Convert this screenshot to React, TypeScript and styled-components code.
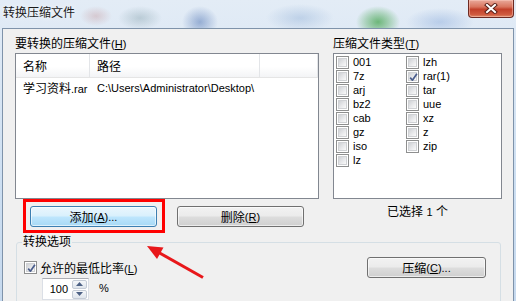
import React from "react";
import styled, { createGlobalStyle } from "styled-components";

const Global = createGlobalStyle`
  html, body { margin: 0; padding: 0; }
  body { width: 516px; height: 301px; overflow: hidden; background: #c9dbef; }
`;

const Screen = styled.div`
  position: relative;
  width: 516px;
  height: 301px;
  overflow: hidden;
  display: flex;
  flex-direction: column;
  font-family: "Liberation Sans", "Noto Sans CJK SC", sans-serif;
  font-size: 12px;
  color: #000;
  background:
    radial-gradient(ellipse 22px 16px at 378px 22px, rgba(70, 165, 80, 0.75) 0, rgba(70, 165, 80, 0.35) 55%, rgba(70, 165, 80, 0) 100%),
    radial-gradient(ellipse 18px 16px at 200px 22px, rgba(60, 100, 170, 0.45) 0, rgba(60, 100, 170, 0.2) 55%, rgba(60, 100, 170, 0) 100%),
    radial-gradient(ellipse 16px 10px at 96px 16px, rgba(180, 100, 100, 0.25), rgba(180, 100, 100, 0)),
    radial-gradient(ellipse 22px 12px at 140px 18px, rgba(70, 110, 120, 0.25), rgba(70, 110, 120, 0)),
    radial-gradient(ellipse 34px 14px at 300px 18px, rgba(110, 150, 200, 0.3), rgba(110, 150, 200, 0)),
    radial-gradient(ellipse 34px 14px at 440px 22px, rgba(110, 150, 210, 0.35), rgba(110, 150, 210, 0)),
    linear-gradient(180deg, #e3ecf6 0%, #cddff2 60%, #c6d9ee 100%);
`;

const TitleBar = styled.div`
  height: 28px;
  flex: none;
  display: flex;
  align-items: flex-start;
`;

const TitleText = styled.div`
  margin: 6px 0 0 3px;
  line-height: 14px;
  font-size: 12px;
  color: #1b1b1b;
  text-shadow: 0 0 6px rgba(255, 255, 255, 0.9);
`;

const CloseButton = styled.div`
  margin-left: auto;
  margin-right: 2px;
  width: 46px;
  height: 18px;
  box-sizing: border-box;
  border: 1px solid #6d2a22;
  border-top: none;
  border-radius: 0 0 4px 4px;
  background: linear-gradient(180deg, #e9a99a 0%, #d9755f 40%, #c2402a 55%, #cf5a3f 85%, #e08a68 100%);
  box-shadow: inset 0 0 0 1px rgba(255, 210, 200, 0.45);
  display: flex;
  align-items: center;
  justify-content: center;
`;

const Client = styled.div`
  flex: 1;
  margin: 0 2px;
  background: #f0f0f0;
  border: 1px solid #7f93aa;
  border-bottom: none;
  padding: 8px 0 0 12px;
  display: flex;
  flex-direction: column;
`;

const Panes = styled.div`
  display: grid;
  grid-template-columns: 304px 169px;
  column-gap: 14px;
`;

const Pane = styled.div`
  display: flex;
  flex-direction: column;
`;

const Label = styled.div`
  line-height: 14px;
  height: 14px;
  margin-bottom: 2px;
  white-space: nowrap;
`;

const Lat = styled.span`
  font-size: 11px;
`;

const Key = styled.u`
  text-decoration: underline;
  text-underline-offset: 1px;
`;

const Box = styled.div`
  box-sizing: border-box;
  height: 146px;
  border: 1px solid #828790;
  background: #fff;
`;

const Header = styled.div`
  display: grid;
  grid-template-columns: 74px 170px 1fr;
  height: 23px;
  background: linear-gradient(180deg, #ffffff 0%, #ffffff 55%, #f3f4f6 100%);
  border-bottom: 1px solid #e5e5e5;
`;

const HeaderCell = styled.div`
  display: flex;
  align-items: center;
  padding-left: 7px;
  border-right: 1px solid #e3e5e8;
`;

const Row = styled.div`
  display: grid;
  grid-template-columns: 74px 1fr;
  height: 19px;
  align-items: center;
  white-space: nowrap;
`;

const Cell = styled.div`
  padding-left: 7px;
`;

const TypeGrid = styled.div`
  display: grid;
  grid-auto-flow: column;
  grid-template-rows: repeat(8, 14px);
  grid-template-columns: 70px 1fr;
  padding: 1px 0 0 2px;
`;

const TypeItem = styled.label`
  display: flex;
  align-items: center;
  gap: 4px;
  font-size: 11px;
  white-space: nowrap;
`;

const CheckBox = styled.span`
  position: relative;
  width: 13px;
  height: 13px;
  box-sizing: border-box;
  flex: none;
  border: 1px solid #8e8f8f;
  background: #fff;
  display: flex;
  align-items: center;
  justify-content: center;
  &::before {
    content: "";
    width: 9px;
    height: 9px;
    box-sizing: border-box;
    border: 1px solid #d0d2d5;
    background: linear-gradient(135deg, #cfd1d5 0%, #e8e9eb 55%, #fafafa 100%);
  }
  svg {
    position: absolute;
    left: 1px;
    top: 1px;
  }
`;

const ButtonRow = styled.div`
  display: flex;
  gap: 20px;
  padding-left: 15px;
  margin-top: 7px;
`;

const Button = styled.div<{ $hot?: boolean; $w?: number }>`
  width: ${(p) => p.$w ?? 127}px;
  height: 21px;
  box-sizing: border-box;
  border: 1px solid ${(p) => (p.$hot ? "#3c7fb1" : "#707070")};
  border-radius: 3px;
  background: ${(p) =>
    p.$hot
      ? "linear-gradient(180deg, #eaf6fd 0%, #d9f0fc 48%, #bee6fd 52%, #a7d9f5 100%)"
      : "linear-gradient(180deg, #f2f2f2 0%, #ebebeb 48%, #dddddd 52%, #cfcfcf 100%)"};
  box-shadow: inset 0 0 0 1px rgba(255, 255, 255, 0.6);
  display: flex;
  align-items: center;
  justify-content: center;
  white-space: nowrap;
`;

const SelectedCount = styled.div`
  margin-top: 6px;
  line-height: 14px;
  text-align: center;
`;

const Group = styled.fieldset`
  margin: 8px 0 0 1px;
  width: 485px;
  box-sizing: border-box;
  min-width: 0;
  border: 1px solid #d5dfe5;
  border-radius: 3px;
  padding: 0 14px 0 7px;
  display: flex;
  justify-content: space-between;
  height: 80px;
`;

const Legend = styled.legend`
  padding: 0 1px;
  margin-left: -2px;
  line-height: 14px;
`;

const GroupLeft = styled.div`
  display: flex;
  flex-direction: column;
  padding-top: 11px;
`;

const OptionRow = styled.label`
  display: flex;
  align-items: center;
  gap: 3px;
  height: 14px;
  white-space: nowrap;
`;

const SpinRow = styled.div`
  display: flex;
  align-items: flex-start;
  margin: 4px 0 0 18px;
`;

const Spinner = styled.div`
  width: 47px;
  height: 22px;
  box-sizing: border-box;
  border: 1px solid #dbdfe6;
  border-top-color: #abadb3;
  background: #fff;
  display: flex;
  align-items: center;
  justify-content: space-between;
  padding: 0 1px 0 0;
`;

const SpinValue = styled.span`
  font-size: 11px;
  flex: 1;
  text-align: right;
  padding-right: 4px;
`;

const SpinButtons = styled.div`
  display: flex;
  flex-direction: column;
  gap: 1px;
`;

const SpinArrow = styled.div`
  width: 15px;
  height: 9px;
  box-sizing: border-box;
  border: 1px solid #c5ccd6;
  border-radius: 2px;
  background: linear-gradient(180deg, #f5f7fa, #dfe5ec);
  display: flex;
  align-items: center;
  justify-content: center;
`;

const Percent = styled.span`
  font-size: 11px;
  margin: 4px 0 0 10px;
`;

const GroupRight = styled.div`
  padding-top: 8px;
`;

const Highlight = styled.div`
  position: absolute;
  left: 23px;
  top: 199px;
  width: 142px;
  height: 34px;
  box-sizing: border-box;
  border: 3px solid #f00;
  pointer-events: none;
`;

const Arrow = styled.svg`
  position: absolute;
  left: 0;
  top: 0;
  pointer-events: none;
`;

const Check = () => (
  <svg width="11" height="11" viewBox="0 0 11 11">
    <path d="M2.2 5.6 L4.4 8.2 L8.9 1.8" fill="none" stroke="#4a5d8c" strokeWidth="1.7" strokeLinejoin="round" />
  </svg>
);

const CB = ({ checked }: { checked?: boolean }) => <CheckBox>{checked && <Check />}</CheckBox>;

const types: [string, boolean][] = [
  ["001", false], ["7z", false], ["arj", false], ["bz2", false], ["cab", false], ["gz", false], ["iso", false], ["lz", false],
  ["lzh", false], ["rar(1)", true], ["tar", false], ["uue", false], ["xz", false], ["z", false], ["zip", false],
];

export default function App() {
  return (
    <Screen>
      <Global />
      <TitleBar>
        <TitleText>转换压缩文件</TitleText>
        <CloseButton>
          <svg width="14" height="11" viewBox="0 0 14 11">
            <path d="M3 2 L11 9 M11 2 L3 9" stroke="#5a2018" strokeWidth="4" strokeLinecap="square" />
            <path d="M3 2 L11 9 M11 2 L3 9" stroke="#fff" strokeWidth="2" strokeLinecap="square" />
          </svg>
        </CloseButton>
      </TitleBar>
      <Client>
        <Panes>
          <Pane>
            <Label>要转换的压缩文件<Lat>(<Key>H</Key>)</Lat></Label>
            <Box>
              <Header>
                <HeaderCell>名称</HeaderCell>
                <HeaderCell>路径</HeaderCell>
                <HeaderCell />
              </Header>
              <Row>
                <Cell>学习资料<Lat>.rar</Lat></Cell>
                <Cell><Lat>C:\Users\Administrator\Desktop\</Lat></Cell>
              </Row>
            </Box>
            <ButtonRow>
              <Button $hot>添加<Lat>(<Key>A</Key>)...</Lat></Button>
              <Button>删除<Lat>(<Key>R</Key>)</Lat></Button>
            </ButtonRow>
          </Pane>
          <Pane>
            <Label>压缩文件类型<Lat>(<Key>T</Key>)</Lat></Label>
            <Box>
              <TypeGrid>
                {types.map(([name, checked]) => (
                  <TypeItem key={name}>
                    <CB checked={checked} />
                    {name}
                  </TypeItem>
                ))}
              </TypeGrid>
            </Box>
            <SelectedCount>已选择 <Lat>1</Lat> 个</SelectedCount>
          </Pane>
        </Panes>
        <Group>
          <Legend>转换选项</Legend>
          <GroupLeft>
            <OptionRow>
              <CB checked />
              <span>允许的最低比率<Lat>(<Key>L</Key>)</Lat></span>
            </OptionRow>
            <SpinRow>
              <Spinner>
                <SpinValue>100</SpinValue>
                <SpinButtons>
                  <SpinArrow>
                    <svg width="7" height="4" viewBox="0 0 7 4"><path d="M0 4 L3.5 0 L7 4Z" fill="#4d6185" /></svg>
                  </SpinArrow>
                  <SpinArrow>
                    <svg width="7" height="4" viewBox="0 0 7 4"><path d="M0 0 L3.5 4 L7 0Z" fill="#4d6185" /></svg>
                  </SpinArrow>
                </SpinButtons>
              </Spinner>
              <Percent>%</Percent>
            </SpinRow>
          </GroupLeft>
          <GroupRight>
            <Button $w={119}>压缩<Lat>(<Key>C</Key>)...</Lat></Button>
          </GroupRight>
        </Group>
      </Client>
      <Highlight />
      <Arrow width="516" height="301" viewBox="0 0 516 301">
        <line x1="203" y1="277.5" x2="157" y2="251.5" stroke="#e8171a" strokeWidth="3" />
        <polygon points="147,246 163.5,247.5 157,259" fill="#e8171a" />
      </Arrow>
    </Screen>
  );
}
